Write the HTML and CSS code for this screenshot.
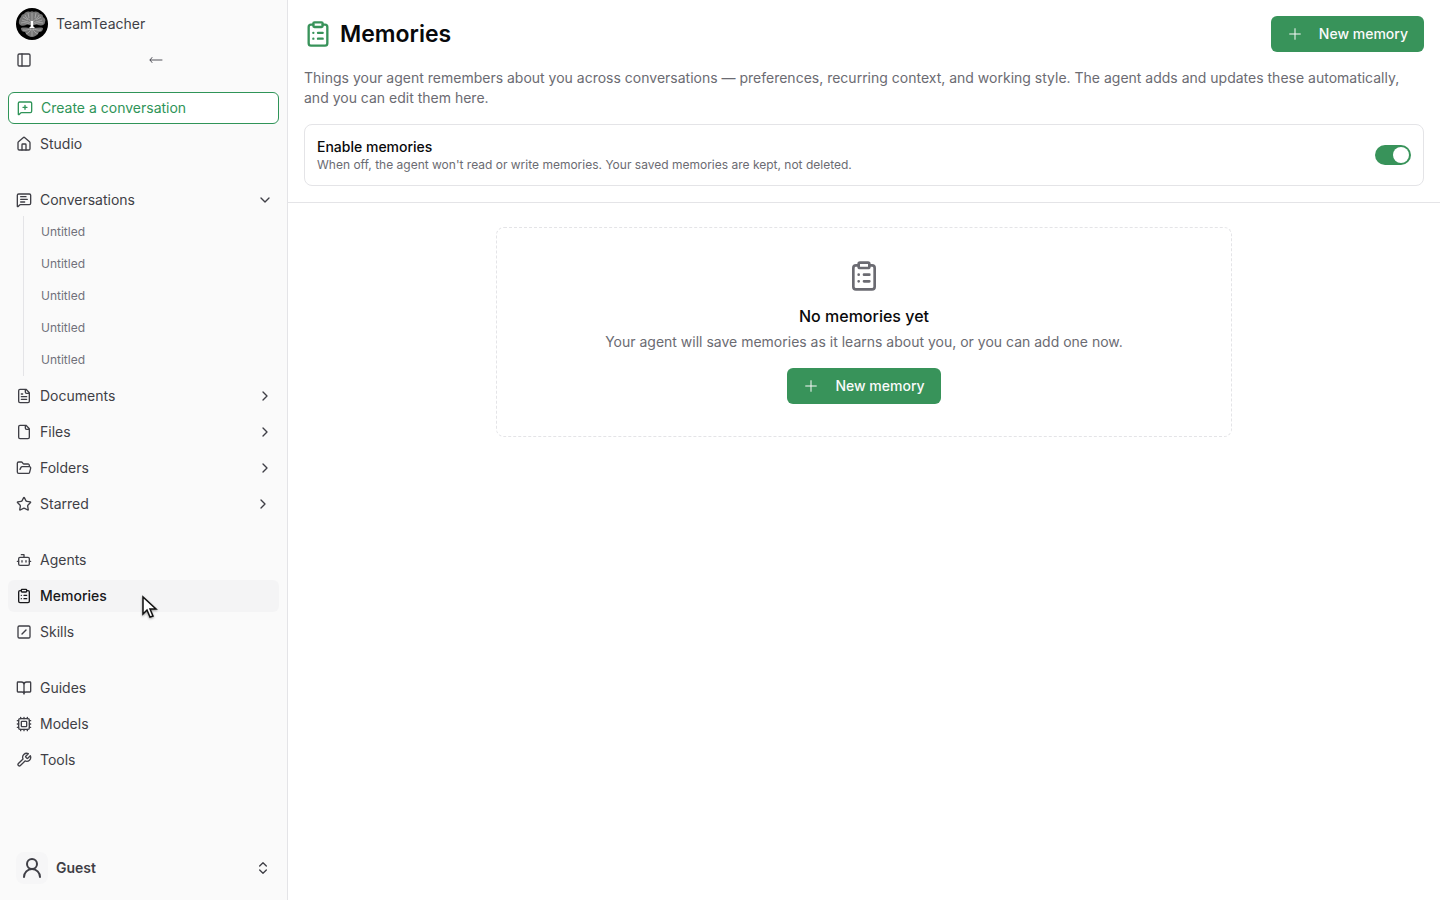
FILE: index.html
```html
<!DOCTYPE html>
<html lang="en">
<head>
    <meta charset="UTF-8">
    <meta name="viewport" content="width=device-width, initial-scale=1.0">
    <title>Memories - TeamTeacher</title>
    <link rel="stylesheet" href="styles.css">
</head>
<body>
    <!-- Shared icons -->
    <svg class="sprite" aria-hidden="true">
        <symbol id="i-clipboard" viewBox="0 0 24 24"><rect width="8" height="4" x="8" y="2" rx="1"/><path d="M16 4h2a2 2 0 0 1 2 2v14a2 2 0 0 1-2 2H6a2 2 0 0 1-2-2V6a2 2 0 0 1 2-2h2M12 11h4M12 16h4M8 11h.01M8 16h.01"/></symbol>
        <symbol id="i-plus" viewBox="0 0 24 24"><path d="M4 12h16M12 4v16"/></symbol>
        <symbol id="i-right" viewBox="0 0 24 24"><path d="m9 18 6-6-6-6"/></symbol>
        <symbol id="i-down" viewBox="0 0 24 24"><path d="m6 9 6 6 6-6"/></symbol>
    </svg>

    <aside class="sidebar">
        <a class="brand" href="#">
            <svg class="logo" viewBox="0 0 32 32" aria-hidden="true">
                <circle cx="16" cy="16" r="16" fill="#000"/>
                <path class="crown" d="M15 18c-1-1-3-2-5-1-4 2-8 0-7-4 0-2 1-3 2-4 0-2 2-3 3-3 1-2 4-3 6-2 1-1 3-1 4 0 2-1 5 0 6 2 2 0 3 1 3 3 2 1 3 3 2 5 0 3-3 4-7 3-2-1-4 0-5 1z"/>
                <path class="crown" d="M15 20c-3 0-7-1-10 0 0 3 2 4 4 4 1 3 5 5 7 5s6-2 7-5c2 0 4-1 4-4-3-1-7 0-10 0z"/>
                <path class="branches" d="M15 17c-1-4-5-3-9-5M15 15c0-4-5-4-6-8M16 14V5M17 15c0-4 5-4 6-8M17 17c1-4 5-3 9-5M5 15c3-1 6 0 8 1M27 15c-3-1-6 0-8 1M12 12l-5-3M13 10l-1-5M20 12l5-3M19 10l1-5M15 21c-2 0-5 2-8 1M15 21c-1 3-3 4-5 5M16 21v7M17 21c1 3 3 4 5 5M17 21c2 0 5 2 8 1"/>
                <path d="M15 13h2v5l2 2h-6l2-2z" fill="#fff"/>
            </svg>
            <span>TeamTeacher</span>
        </a>
        <div class="toolbar">
            <button class="icon-btn" type="button" aria-label="Toggle sidebar">
                <svg class="icon" viewBox="0 0 24 24"><rect width="18" height="18" x="3" y="3" rx="2"/><path d="M9 3v18"/></svg>
            </button>
            <button class="icon-btn back" type="button" aria-label="Back">
                <svg class="icon" viewBox="0 0 16 16"><path d="M2 8h12M4 5.500 2 8l2 2.500"/></svg>
            </button>
        </div>

        <nav class="nav">
            <div class="group">
                <a class="item create" href="#">
                    <svg class="icon" viewBox="0 0 24 24"><path d="M22 17a2 2 0 0 1-2 2H6.828a2 2 0 0 0-1.414.586l-2.202 2.202A.71.71 0 0 1 2 21.286V5a2 2 0 0 1 2-2h16a2 2 0 0 1 2 2zM12 8v6M9 11h6"/></svg>
                    Create a conversation
                </a>
                <a class="item" href="#">
                    <svg class="icon" viewBox="0 0 24 24"><path d="M15 21v-8a1 1 0 0 0-1-1h-4a1 1 0 0 0-1 1v8"/><path d="M3 10a2 2 0 0 1 .709-1.528l7-5.999a2 2 0 0 1 2.582 0l7 5.999A2 2 0 0 1 21 10v9a2 2 0 0 1-2 2H5a2 2 0 0 1-2-2z"/></svg>
                    Studio
                </a>
            </div>

            <div class="group">
                <div class="section">
                    <button class="item folding" type="button" aria-expanded="true">
                        <svg class="icon" viewBox="0 0 24 24"><path d="M22 17a2 2 0 0 1-2 2H6.828a2 2 0 0 0-1.414.586l-2.202 2.202A.71.71 0 0 1 2 21.286V5a2 2 0 0 1 2-2h16a2 2 0 0 1 2 2zM7 11h10M7 15h6M7 7h8"/></svg>
                        Conversations
                        <svg class="icon chevron"><use href="#i-down"/></svg>
                    </button>
                    <div class="sublist">
                        <a href="#">Untitled</a>
                        <a href="#">Untitled</a>
                        <a href="#">Untitled</a>
                        <a href="#">Untitled</a>
                        <a href="#">Untitled</a>
                    </div>
                </div>
                <button class="item folding" type="button" aria-expanded="false">
                    <svg class="icon" viewBox="0 0 24 24"><path d="M15 2H6a2 2 0 0 0-2 2v16a2 2 0 0 0 2 2h12a2 2 0 0 0 2-2V7ZM14 2v4a2 2 0 0 0 2 2h4M10 9H8M16 13H8M16 17H8"/></svg>
                    Documents
                    <svg class="icon chevron"><use href="#i-right"/></svg>
                </button>
                <button class="item folding" type="button" aria-expanded="false">
                    <svg class="icon" viewBox="0 0 24 24"><path d="M15 2H6a2 2 0 0 0-2 2v16a2 2 0 0 0 2 2h12a2 2 0 0 0 2-2V7ZM14 2v4a2 2 0 0 0 2 2h4"/></svg>
                    Files
                    <svg class="icon chevron"><use href="#i-right"/></svg>
                </button>
                <button class="item folding" type="button" aria-expanded="false">
                    <svg class="icon" viewBox="0 0 24 24"><path d="m6 14 1.500-2.900A2 2 0 0 1 9.240 10H20a2 2 0 0 1 1.940 2.500l-1.540 6a2 2 0 0 1-1.950 1.500H4a2 2 0 0 1-2-2V5a2 2 0 0 1 2-2h3.900a2 2 0 0 1 1.690.9l.81 1.200a2 2 0 0 0 1.670.9H18a2 2 0 0 1 2 2v2"/></svg>
                    Folders
                    <svg class="icon chevron"><use href="#i-right"/></svg>
                </button>
                <button class="item" type="button" aria-expanded="false">
                    <svg class="icon" viewBox="0 0 24 24"><path d="M11.525 2.295a.53.53 0 0 1 .95 0l2.310 4.679a2.123 2.123 0 0 0 1.595 1.160l5.166.756a.53.53 0 0 1 .294.904l-3.736 3.638a2.123 2.123 0 0 0-.611 1.878l.882 5.140a.53.53 0 0 1-.771.560l-4.618-2.428a2.122 2.122 0 0 0-1.973 0L6.396 21.010a.53.53 0 0 1-.770-.560l.881-5.139a2.122 2.122 0 0 0-.611-1.879L2.160 9.795a.53.53 0 0 1 .294-.906l5.165-.755a2.122 2.122 0 0 0 1.597-1.160z"/></svg>
                    Starred
                    <svg class="icon chevron"><use href="#i-right"/></svg>
                </button>
            </div>

            <div class="group">
                <a class="item" href="#">
                    <svg class="icon" viewBox="0 0 24 24"><path d="M12 8V4H8M2 14h2M20 14h2M15 13v2M9 13v2"/><rect width="16" height="12" x="4" y="8" rx="2"/></svg>
                    Agents
                </a>
                <a class="item active" href="#" aria-current="page">
                    <svg class="icon"><use href="#i-clipboard"/></svg>
                    Memories
                </a>
                <a class="item" href="#">
                    <svg class="icon" viewBox="0 0 24 24"><rect width="18" height="18" x="3" y="3" rx="2"/><path d="m9 15 6-6"/></svg>
                    Skills
                </a>
            </div>

            <div class="group">
                <a class="item" href="#">
                    <svg class="icon" viewBox="0 0 24 24"><path d="M12 7v14M3 18a1 1 0 0 1-1-1V4a1 1 0 0 1 1-1h5a4 4 0 0 1 4 4 4 4 0 0 1 4-4h5a1 1 0 0 1 1 1v13a1 1 0 0 1-1 1h-6a3 3 0 0 0-3 3 3 3 0 0 0-3-3z"/></svg>
                    Guides
                </a>
                <a class="item" href="#">
                    <svg class="icon" viewBox="0 0 24 24"><rect width="16" height="16" x="4" y="4" rx="2"/><rect width="8" height="8" x="8" y="8" rx="1"/><path d="M12 20v2M12 2v2M17 20v2M17 2v2M7 20v2M7 2v2M2 12h2M2 17h2M2 7h2M20 12h2M20 17h2M20 7h2"/></svg>
                    Models
                </a>
                <a class="item" href="#">
                    <svg class="icon" viewBox="0 0 24 24"><path d="M14.700 6.300a1 1 0 0 0 0 1.400l1.600 1.600a1 1 0 0 0 1.400 0l3.770-3.770a6 6 0 0 1-7.940 7.940l-6.910 6.910a2.120 2.120 0 0 1-3-3l6.910-6.910a6 6 0 0 1 7.940-7.940l-3.760 3.760z"/></svg>
                    Tools
                </a>
            </div>
        </nav>

        <button class="account" type="button">
            <span class="avatar">
                <svg class="icon" viewBox="0 0 24 24"><circle cx="12" cy="8" r="5"/><path d="M20 21a8 8 0 0 0-16 0"/></svg>
            </span>
            Guest
            <svg class="icon chevron" viewBox="0 0 24 24"><path d="m7 15 5 5 5-5M7 9l5-5 5 5"/></svg>
        </button>
    </aside>

    <main class="main">
        <header class="page-header">
            <div class="title-row">
                <svg class="icon title-icon"><use href="#i-clipboard"/></svg>
                <h1>Memories</h1>
                <button class="btn" type="button"><svg class="icon"><use href="#i-plus"/></svg>New memory</button>
            </div>
            <p class="description">Things your agent remembers about you across conversations — preferences, recurring context, and working style. The agent adds and updates these automatically, and you can edit them here.</p>
            <div class="setting">
                <div>
                    <label for="enable-memories">Enable memories</label>
                    <p id="enable-hint">When off, the agent won't read or write memories. Your saved memories are kept, not deleted.</p>
                </div>
                <input class="switch" type="checkbox" role="switch" id="enable-memories" aria-describedby="enable-hint" checked>
            </div>
        </header>

        <div class="content">
            <section class="empty">
                <svg class="icon empty-icon"><use href="#i-clipboard"/></svg>
                <h2>No memories yet</h2>
                <p>Your agent will save memories as it learns about you, or you can add one now.</p>
                <button class="btn" type="button"><svg class="icon"><use href="#i-plus"/></svg>New memory</button>
            </section>
        </div>
    </main>

    <!-- Mouse pointer -->
    <svg class="pointer" viewBox="0 0 20 26" aria-hidden="true"><path d="M3 2v17l4-4 3 7 3-1-3-7h6z"/></svg>
</body>
</html>
```
FILE: styles.css
```css
* { box-sizing: border-box; }
body { margin: 0; display: flex; min-height: 100vh; font-family: Inter, "Liberation Sans", sans-serif; font-size: 14px; line-height: 20px; color: #09090b; background: #fff; }
h1, h2, p { margin: 0; }
a { color: inherit; text-decoration: none; }
button { font: inherit; color: inherit; background: none; border: none; padding: 0; cursor: pointer; }

.sprite { position: absolute; width: 0; height: 0; }
.icon { width: 16px; height: 16px; flex: none; fill: none; stroke: currentColor; stroke-width: 2; stroke-linecap: round; stroke-linejoin: round; }

/* Sidebar */
.sidebar { width: 288px; flex: none; display: flex; flex-direction: column; padding: 8px; background: #fafafa; border-right: 1px solid #e4e4e7; color: #3f3f46; }
.brand { display: flex; align-items: center; gap: 8px; padding: 0 8px; }
.logo { width: 32px; height: 32px; }
.crown { fill: #777; }
.branches { fill: none; stroke: #c4c4c4; stroke-width: 0.6; }
.toolbar { display: grid; grid-template-columns: 16px 1fr; gap: 8px; align-items: center; height: 40px; padding: 0 8px; }
.icon-btn { display: flex; justify-self: start; }
.back { justify-self: center; color: #52525b; }
.back .icon { stroke-width: 1; }

.nav { display: flex; flex-direction: column; gap: 24px; padding-top: 12px; }
.group { display: flex; flex-direction: column; gap: 4px; }
.item { display: flex; align-items: center; gap: 8px; height: 32px; padding: 0 8px; border-radius: 6px; text-align: left; width: 100%; }
.item.folding { padding-right: 6px; }
.item.active { background: #f4f4f5; color: #18181b; font-weight: 500; }
.create { border: 1px solid #2f9458; color: #2f9458; background: #fff; }
.chevron { margin-left: auto; }
.sublist { margin-left: 15px; border-left: 1px solid #e4e4e7; color: #71717a; font-size: 12px; }
.sublist a { display: block; padding: 6px 17px; }

.account { display: flex; align-items: center; gap: 8px; margin-top: auto; height: 48px; padding: 0 8px; font-weight: 600; text-align: left; }
.avatar { display: flex; align-items: center; justify-content: center; width: 32px; height: 32px; border-radius: 8px; background: #f6f6f7; }
.avatar .icon { width: 24px; height: 24px; }

/* Main */
.main { flex: 1; min-width: 0; }
.page-header { display: flex; flex-direction: column; gap: 16px; padding: 16px; border-bottom: 1px solid #e4e4e7; }
.title-row { display: flex; align-items: center; gap: 8px; }
.title-icon { width: 28px; height: 28px; color: #38935a; }
h1 { font-size: 23px; line-height: 32px; font-weight: 600; }
.title-row .btn { margin-left: auto; }
.btn { display: flex; align-items: center; gap: 16px; height: 36px; padding: 0 16px; border-radius: 6px; background: #38935a; color: #fafafa; font-weight: 500; }
.btn .icon { stroke-width: 1.5; }
.description { color: #6b6b72; }
.setting { display: flex; align-items: center; justify-content: space-between; gap: 16px; padding: 12px; border: 1px solid #e4e4e7; border-radius: 8px; }
.setting label { display: block; font-weight: 500; }
.setting p { color: #6b6b72; font-size: 12px; line-height: 16px; }
.switch { appearance: none; flex: none; display: flex; justify-content: flex-end; width: 36px; height: 20px; margin: 0; padding: 2px; border-radius: 10px; background: #ccc; }
.switch::before { content: ""; width: 16px; height: 16px; border-radius: 50%; background: #fff; }
.switch:checked { background: #38935a; }

.content { padding: 24px 16px; }
.empty { display: flex; flex-direction: column; align-items: center; max-width: 736px; margin: 0 auto; padding: 32px; border: 1px dashed #e4e4e7; border-radius: 8px; }
.empty-icon { width: 32px; height: 32px; color: #6b6b72; }
.empty h2 { margin: 12px 0 4px; font-size: 16px; line-height: 24px; font-weight: 500; }
.empty p { margin-bottom: 16px; color: #6b6b72; }

.pointer { position: absolute; left: 140px; top: 595px; width: 20px; height: 26px; fill: #fff; stroke: #111; stroke-width: 1.5; filter: drop-shadow(0 1px 1px #999); pointer-events: none; }
```
